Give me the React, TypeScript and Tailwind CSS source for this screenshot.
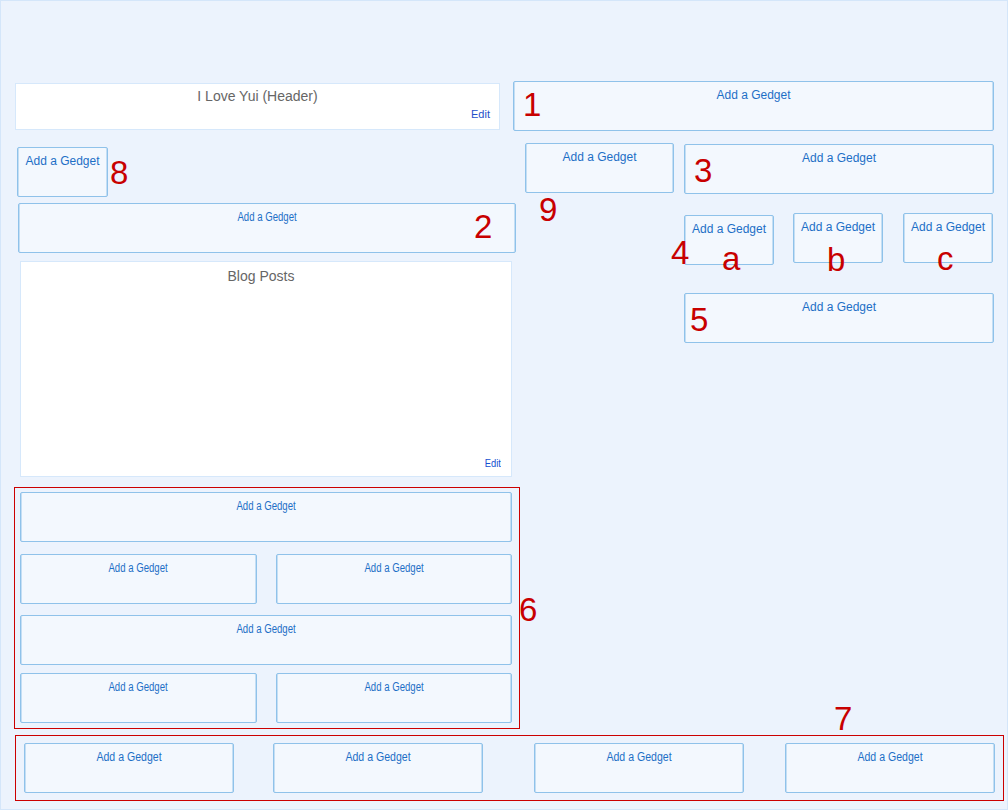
import React from 'react';

type GadgetProps = {
  className?: string;
  squeeze?: string;
};

// one "Add a Gedget" placeholder box
const Gadget = ({ className = '', squeeze = '' }: GadgetProps) => (
  <div
    className={`h-[50px] shrink-0 rounded-[2px] border border-[#8fc2ea] bg-[#f3f8fe] pt-[6px] text-center text-[12px] leading-[14px] text-[#1d6fc6] shadow-[inset_-1px_0_0_#c4def4,inset_1px_0_0_#c4def4] ${className}`}
  >
    <span className={`inline-block ${squeeze}`}>Add a Gedget</span>
  </div>
);

const Label = ({ text, className }: { text: string; className: string }) => (
  <span className={`absolute text-[33px] leading-none text-[#c80000] ${className}`}>{text}</span>
);

const App = () => {
  return (
    <div className="relative h-[810px] w-[1008px] overflow-hidden border border-[#d4e6fa] bg-[#ecf3fd] font-['Liberation_Sans',Arial,sans-serif]">
      {/* Header row */}
      <div className="mt-[80px] flex items-start">
        <div className="ml-[14px] mt-[2px] flex h-[47px] w-[485px] shrink-0 flex-col border border-[#d6e8fb] bg-white">
          <p className="pt-[4px] text-center text-[14px] leading-[16px] text-[#666]">I Love Yui (Header)</p>
          <p className="mt-[4px] pr-[9px] text-right text-[11px] leading-[13px] text-[#1f4fc9]">Edit</p>
        </div>
        <Gadget className="ml-[13px] w-[481px]" />
      </div>

      {/* Main area */}
      <div className="mt-[16px] flex items-start">
        {/* Left column */}
        <div className="ml-[13px] flex w-[506px] shrink-0 flex-col">
          <Gadget className="ml-[3px] w-[91px]" />
          <Gadget className="ml-[4px] mt-[6px] w-[498px]" squeeze="scale-x-[0.8]" />

          <div className="ml-[6px] mt-[8px] flex h-[216px] w-[492px] flex-col border border-[#d6e8fb] bg-white pb-[6px] pr-[10px] pt-[6px]">
            <p className="text-center text-[14px] leading-[16px] text-[#666]">Blog Posts</p>
            <p className="mt-auto text-right text-[11px] leading-[13px] text-[#1550d0]">
              <span className="inline-block origin-right scale-x-[0.85]">Edit</span>
            </p>
          </div>

          {/* Section 6 */}
          <div className="mt-[10px] h-[242px] w-[506px] border border-[#cc0000] pl-[5px] pt-[4px]">
            <Gadget className="w-[492px]" squeeze="scale-x-[0.8]" />
            <div className="mt-[12px] flex">
              <Gadget className="w-[237px]" squeeze="scale-x-[0.8]" />
              <Gadget className="ml-[19px] w-[236px]" squeeze="scale-x-[0.8]" />
            </div>
            <Gadget className="mt-[11px] w-[492px]" squeeze="scale-x-[0.8]" />
            <div className="mt-[8px] flex">
              <Gadget className="w-[237px]" squeeze="scale-x-[0.8]" />
              <Gadget className="ml-[19px] w-[236px]" squeeze="scale-x-[0.8]" />
            </div>
          </div>
        </div>

        {/* Right column */}
        <div className="-mt-[4px] ml-[5px] flex flex-col">
          <div className="flex items-start">
            <Gadget className="w-[149px]" />
            <Gadget className="ml-[10px] mt-[1px] w-[310px]" />
          </div>
          <div className="ml-[159px] flex flex-col">
            <div className="mt-[19px] flex items-start">
              <Gadget className="mt-[2px] w-[90px]" />
              <Gadget className="ml-[19px] w-[90px]" />
              <Gadget className="ml-[20px] w-[90px]" />
            </div>
            <Gadget className="mt-[28px] w-[310px]" />
          </div>
        </div>
      </div>

      {/* Section 7 */}
      <div className="ml-[14px] mt-[6px] flex h-[66px] w-[989px] items-start border border-[#cc0000] pl-[8px] pt-[7px]">
        <Gadget className="w-[210px]" squeeze="scale-x-[0.88]" />
        <Gadget className="ml-[39px] w-[210px]" squeeze="scale-x-[0.88]" />
        <Gadget className="ml-[51px] w-[210px]" squeeze="scale-x-[0.88]" />
        <Gadget className="ml-[41px] w-[210px]" squeeze="scale-x-[0.88]" />
      </div>

      {/* Annotations */}
      <Label text="1" className="left-[522px] top-[87px]" />
      <Label text="8" className="left-[109px] top-[155px]" />
      <Label text="9" className="left-[538px] top-[192px]" />
      <Label text="3" className="left-[693px] top-[153px]" />
      <Label text="2" className="left-[473px] top-[209px]" />
      <Label text="4" className="left-[670px] top-[235px]" />
      <Label text="a" className="left-[721px] top-[241px]" />
      <Label text="b" className="left-[826px] top-[242px]" />
      <Label text="c" className="left-[936px] top-[241px]" />
      <Label text="5" className="left-[689px] top-[302px]" />
      <Label text="6" className="left-[518px] top-[592px]" />
      <Label text="7" className="left-[833px] top-[701px]" />
    </div>
  );
};

export default App;
